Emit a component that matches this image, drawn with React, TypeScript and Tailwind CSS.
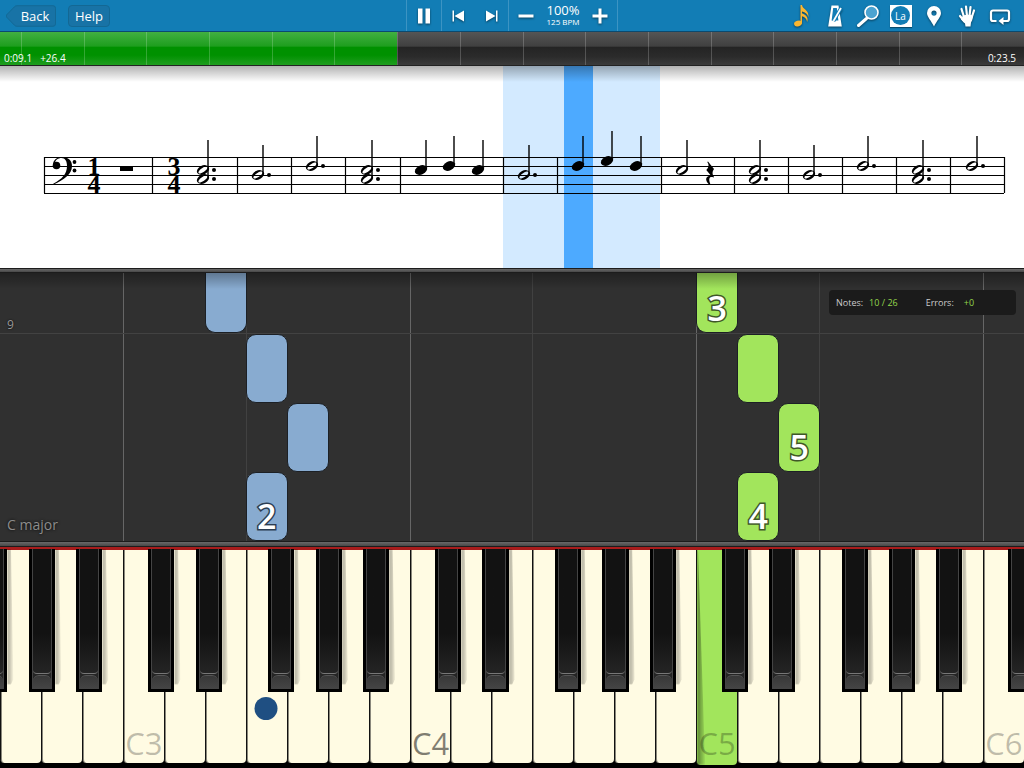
import { ReactNode } from "react";
import clsx from "clsx";

type Head = { x: number; y: number };
type ScoreNote = { x: number; ys: number[]; filled?: boolean; dotted?: boolean };

const STAFF_LINES = [91, 100, 109, 118, 127];
const BAR_LINES = [44, 152, 237, 291, 345, 400, 503, 557, 661, 734, 788, 842, 896, 950, 1004];

const SCORE: ScoreNote[] = [
    { x: 203, ys: [104, 113], dotted: true },
    { x: 258, ys: [109], dotted: true },
    { x: 312, ys: [100], dotted: true },
    { x: 367, ys: [104, 113], dotted: true },
    { x: 421, ys: [104], filled: true },
    { x: 449, ys: [100], filled: true },
    { x: 478, ys: [104], filled: true },
    { x: 524, ys: [109], dotted: true },
    { x: 578, ys: [100], filled: true },
    { x: 607, ys: [95], filled: true },
    { x: 636, ys: [100], filled: true },
    { x: 682, ys: [104] },
    { x: 755, ys: [104, 113], dotted: true },
    { x: 809, ys: [109], dotted: true },
    { x: 863, ys: [100], dotted: true },
    { x: 918, ys: [104, 113], dotted: true },
    { x: 972, ys: [100], dotted: true },
];

const FALLING_NOTES = [
    { place: "col-start-6 row-start-1", hand: "left", finger: "", cut: true },
    { place: "col-start-7 row-start-2", hand: "left", finger: "" },
    { place: "col-start-8 row-start-3", hand: "left", finger: "" },
    { place: "col-start-7 row-start-4", hand: "left", finger: "2" },
    { place: "col-start-18 row-start-1", hand: "right", finger: "3", cut: true },
    { place: "col-start-19 row-start-2", hand: "right", finger: "" },
    { place: "col-start-20 row-start-3", hand: "right", finger: "5" },
    { place: "col-start-19 row-start-4", hand: "right", finger: "4" },
];

const GRID_LINES = [
    { place: "col-start-4", strong: true },
    { place: "col-start-7", strong: false },
    { place: "col-start-11", strong: true },
    { place: "col-start-14", strong: false },
    { place: "col-start-18", strong: true },
    { place: "col-start-21", strong: false },
    { place: "col-start-25", strong: true },
];

// how far the sharp sits from the left edge of its white key
const SHARP_OFFSET: Record<string, string> = {
    C: "left-[62%]",
    D: "left-[78%]",
    F: "left-[55%]",
    G: "left-[71%]",
    A: "left-[86%]",
};

const WHITE_KEYS = Array.from({ length: 25 }, (_, i) => {
    const step = i + 4;
    return { name: "CDEFGAB"[step % 7], octave: 2 + Math.floor(step / 7) };
});

function ToolButton({ label, className, children }: { label: string; className?: string; children: ReactNode }) {
    return (
        <button type="button" aria-label={label} className={clsx("flex h-full items-center justify-center text-white", className ?? "w-[33px]")}>
            {children}
        </button>
    );
}

function Icon({ children }: { children: ReactNode }) {
    return (
        <svg viewBox="0 0 24 24" className="size-6 drop-shadow-[0_1px_1px_rgba(0,0,0,0.5)]" fill="currentColor" aria-hidden="true">
            {children}
        </svg>
    );
}

function TopBar() {
    return (
        <header className="grid h-8 shrink-0 grid-cols-[1fr_auto_1fr] border-b border-[#0b4a70] bg-[#127db5]">
            <div className="flex items-center gap-3 pl-1.5 text-[13px] leading-5 text-white">
                <button type="button" className="relative h-[22px] w-[50px] pl-2">
                    <svg viewBox="0 0 51 22" className="absolute inset-0 size-full" aria-hidden="true">
                        <path d="M11 .5H48a2.500 2.500 0 0 1 2.500 2.500V19a2.500 2.500 0 0 1-2.500 2.500H11q-1.500 0-2.500-1.200L.5 12q-.8-1 0-2L8.500 1.700Q9.500.5 11 .5Z" fill="#1873a6" stroke="#136894" />
                    </svg>
                    <span className="relative">Back</span>
                </button>
                <button type="button" className="h-[22px] w-[42px] rounded border border-[#136894] bg-[#1873a6]">Help</button>
            </div>

            <div className="flex w-[212px]">
                <ToolButton label="Pause" className="w-[35px] border-l border-[#3c94c3]">
                    <Icon><path d="M6 4.500h4.500v15H6zM13.500 4.500H18v15h-4.500z" /></Icon>
                </ToolButton>
                <div className="flex border-x border-[#3c94c3]">
                    <ToolButton label="Previous bar">
                        <Icon><path d="M5.500 6.500h1.500v11H5.500zM17 6.500v11L7.500 12z" /></Icon>
                    </ToolButton>
                    <ToolButton label="Next bar">
                        <Icon><path d="M16 6.500h1.500v11H16zM6 6.500v11L15.500 12z" /></Icon>
                    </ToolButton>
                </div>
                <div className="flex flex-1 items-center border-r border-[#3c94c3]">
                    <ToolButton label="Slower" className="w-[34px]">
                        <Icon><path d="M4.500 10.500h15v3h-15z" /></Icon>
                    </ToolButton>
                    <div className="flex flex-1 flex-col items-center whitespace-nowrap text-white">
                        <span className="text-[13px] leading-[13px]">100%</span>
                        <span className="text-[8px] leading-[10px] font-medium">125 BPM</span>
                    </div>
                    <ToolButton label="Faster" className="w-[34px]">
                        <Icon><path d="M4.500 10.500h6v-6h3v6h6v3h-6v6h-3v-6h-6z" /></Icon>
                    </ToolButton>
                </div>
            </div>

            <div className="flex justify-end pr-2">
                <ToolButton label="Notes">
                    <Icon>
                        <g fill="#fbb62f">
                            <ellipse cx="8" cy="19.500" rx="4" ry="2.800" transform="rotate(-18 8 19.500)" />
                            <path d="M10.500 1H12c.3 4 7.500 5 6.300 12-.5-3-3-4.900-6.300-5.600v1.800c3 1.300 7 3.500 5.100 8.800-.4-3.200-2.300-4.900-5.100-5.700V19.500h-1.500z" />
                        </g>
                    </Icon>
                </ToolButton>
                <ToolButton label="Metronome">
                    <Icon>
                        <path d="M8.500 1.500h7L18.800 22.500H5.200z" />
                        <path d="M10.200 4h3.600l1.600 12.500H8.600z" fill="#127db5" />
                        <path d="m10.500 17 7.500-13" stroke="#127db5" strokeWidth="3.600" />
                        <path d="m10.500 17 7.500-13" stroke="white" strokeWidth="1.700" />
                    </Icon>
                </ToolButton>
                <ToolButton label="Zoom">
                    <Icon>
                        <path d="m2.500 21.500 8-7" stroke="white" strokeWidth="3" strokeLinecap="round" />
                        <circle cx="15.500" cy="8.500" r="6.500" fill="#4ba3d1" stroke="white" strokeWidth="1.600" />
                    </Icon>
                </ToolButton>
                <ToolButton label="Note names">
                    <span className="flex size-[22px] items-center justify-center bg-white shadow-[0_1px_1px_rgba(0,0,0,0.4)]">
                        <span className="flex size-[19px] items-center justify-center rounded-full bg-[#127db5] text-[10px] leading-none">La</span>
                    </span>
                </ToolButton>
                <ToolButton label="Marker">
                    <Icon>
                        <path fillRule="evenodd" d="M12 2a7 7 0 0 1 7 7c0 4-4.500 8-7 13.500C9.500 17 5 13 5 9a7 7 0 0 1 7-7Zm0 4.500a2.600 2.600 0 1 0 0 5.200 2.600 2.600 0 0 0 0-5.200Z" />
                    </Icon>
                </ToolButton>
                <ToolButton label="Hands">
                    <Icon>
                        <g stroke="white" strokeWidth="2.200" strokeLinecap="round" fill="none">
                            <path d="m9 13-2.500-8M12 12l-1-9.500M14.500 12l1-9M16.500 14 19 6.500M9.500 17.500 5 12" />
                        </g>
                        <path d="M8 11.500q5-1.500 10 0-.3 4.500-2 7l-.5 4h-5l-.5-3-4-4z" />
                    </Icon>
                </ToolButton>
                <ToolButton label="Loop">
                    <Icon>
                        <path d="M8.500 17H5a2 2 0 0 1-2-2V8.500a2 2 0 0 1 2-2h14a2 2 0 0 1 2 2V15a2 2 0 0 1-2 2h-4" fill="none" stroke="white" strokeWidth="2.200" />
                        <path d="m10.500 17 5-4v8z" />
                    </Icon>
                </ToolButton>
            </div>
        </header>
    );
}

function ProgressBar() {
    return (
        <div className="relative h-[34px] shrink-0 border-b border-[#222] bg-[linear-gradient(#555,#404040_43%,#242424_46%,#2b2b2b_75%,#3b3b3b)] text-[10px] leading-3 text-white">
            <div className="absolute inset-y-0 left-0 w-[38.8%] bg-[linear-gradient(#42b042,#1e9e1e_43%,#009100_46%,#009100_70%,#1f9d1f)]" />
            <div className="absolute inset-0 flex">
                <div className="w-[21px]" />
                {Array.from({ length: 16 }, (_, i) => (
                    <div key={i} className="flex-1 border-l border-white/20" />
                ))}
            </div>
            <div className="relative flex h-full items-end gap-2 px-1 pb-px">
                <span>0:09.1</span>
                <span>+26.4</span>
                <span className="ml-auto pr-1">0:23.5</span>
            </div>
        </div>
    );
}

function HollowHead({ x, y }: Head) {
    return (
        <path
            fillRule="evenodd"
            d="M-6.500 0a6.500 4.500 0 1 0 13 0a6.500 4.500 0 1 0-13 0ZM-5.200.7a5.300 1.700-8 1 0 10.400-1.400a5.300 1.700-8 1 0-10.400 1.400Z"
            transform={`translate(${x} ${y}) rotate(-26)`}
        />
    );
}

function StemmedNote({ note }: { note: ScoreNote }) {
    const top = note.ys[0];
    const bottom = note.ys[note.ys.length - 1];
    return (
        <g>
            {note.ys.map((y) => (
                <g key={y}>
                    {note.filled ? (
                        <ellipse rx="6.500" ry="4.500" transform={`translate(${note.x} ${y}) rotate(-26)`} />
                    ) : (
                        <HollowHead x={note.x} y={y} />
                    )}
                    {note.dotted && <circle cx={note.x + 11} cy={y} r="2" />}
                </g>
            ))}
            <path d={`M${note.x + 5} ${bottom - 1}V${top - 30}`} stroke="black" strokeWidth="1.400" />
        </g>
    );
}

function SheetMusic() {
    return (
        <section aria-label="Sheet music" className="relative min-h-0 flex-[202] bg-white">
            <svg viewBox="0 0 1024 202" className="absolute inset-0 size-full">
                <rect x="503" y="0" width="157" height="202" fill="#d3eaff" />
                <rect x="564" y="0" width="29" height="202" fill="#4daaff" />

                <g stroke="black" strokeWidth="1.200">
                    {STAFF_LINES.map((y) => <path key={y} d={`M44 ${y + 0.5}H1004`} />)}
                    {BAR_LINES.map((x) => <path key={x} d={`M${x + 0.5} 91V127`} />)}
                </g>

                {/* bass clef */}
                <circle cx="56.500" cy="99.500" r="3.800" />
                <path d="M53.200 99.500C52.500 94 57 91 62 91c6.500 0 10 3.500 10 9 0 8-8 14-18.500 18.500l-.3-.7C62 113 67 108 67 100c0-5-1.800-8-5.500-8-3.500 0-6.500 2-6.800 6z" />
                <circle cx="74.500" cy="96" r="1.900" />
                <circle cx="74.500" cy="104.500" r="1.900" />

                <g fontFamily="Liberation Serif, serif" fontWeight="700" fontSize="26" textAnchor="middle">
                    <text x="94" y="109">1</text>
                    <text x="94" y="127">4</text>
                    <text x="174" y="109">3</text>
                    <text x="174" y="127">4</text>
                </g>
                <rect x="120" y="100" width="13" height="5" />

                {SCORE.map((note) => <StemmedNote key={note.x} note={note} />)}

                {/* quarter rest */}
                <path d="M708 95.500 714 103q-3 4 0 8l-.5.5c-4-1.500-5.500 1-3 7l-.7.5c-5-4-5-9 1-9.500l-4.500-5.500q4-4 1-8z" />
            </svg>
            <div className="absolute inset-x-0 top-0 h-4 bg-linear-to-b from-black/30 to-transparent" />
        </section>
    );
}

function Divider({ className }: { className: string }) {
    return <div className={clsx("shrink-0 border-y border-[#1c1c1c] bg-linear-to-b from-[#696969] to-[#484848]", className)} />;
}

function PianoRoll() {
    return (
        <section aria-label="Falling notes" className="relative min-h-0 flex-[268] overflow-hidden bg-[#303030]">
            <div className="grid h-full grid-cols-25 grid-rows-[61fr_69fr_69fr_69fr]">
                {GRID_LINES.map((line) => (
                    <div key={line.place} className={clsx("row-span-4 row-start-1 border-l", line.place, line.strong ? "border-[#666]" : "border-[#414141]")} />
                ))}
                <div className="col-span-25 col-start-1 row-start-1 border-b border-[#424242]" />
                {FALLING_NOTES.map((note) => (
                    <div
                        key={note.place}
                        className={clsx(
                            "relative -mr-px flex min-h-0 items-end justify-center border border-[#1c2025] pb-1 text-[34px] leading-10 font-semibold text-white [paint-order:stroke_fill]",
                            note.place,
                            note.cut ? "mb-px rounded-b-[10px] border-t-0" : "rounded-[10px]",
                            note.hand === "left" ? "bg-[#88abd0] [-webkit-text-stroke:3px_#2c3d52]" : "bg-[#a2e55c] [-webkit-text-stroke:3px_#3f5728]"
                        )}
                    >
                        {note.finger}
                    </div>
                ))}
            </div>
            <div className="absolute inset-x-0 top-0 h-4 bg-linear-to-b from-black/30 to-transparent" />
            <div className="absolute inset-x-0 top-0 h-[61px] pl-[7px] text-xs font-medium text-[#999] text-shadow-[0_0_2px_black]">
                <span className="flex h-full items-end pb-px">9</span>
            </div>
            <span className="absolute bottom-1.5 left-[7px] text-sm font-medium text-[#8c8c8c] text-shadow-[0_0_3px_black]">C major</span>

            <div className="absolute top-[17px] right-2 flex h-[25px] w-[187px] items-center rounded bg-[#1b1b1b] px-[7px] text-[9px] text-[#ccc]">
                <span>Notes:</span>
                <span className="ml-1.5 text-[#93d64b]">10 / 26</span>
                <span className="ml-7">Errors:</span>
                <span className="ml-2.5 text-[#93d64b]">+0</span>
            </div>
        </section>
    );
}

function BlackKey({ label, offset }: { label: string; offset: string }) {
    return (
        <button type="button" aria-label={label} className={clsx("absolute -top-px z-10 h-[67%] w-[64%] bg-black px-[3px] pb-[3px]", offset)}>
            <span className="absolute top-0 left-full h-[95%] w-[6px] bg-linear-to-r from-black/35 via-black/20 to-black/5 blur-[1px] [clip-path:polygon(0_0,60%_0,100%_96%,60%_100%,0_100%)]" />
            <span className="flex h-full flex-col border-x border-[#444] bg-linear-to-b from-[#121212] from-60% to-[#2c2c2c]">
                <span className="flex-1 rounded-b border-b border-[#777]" />
                <span className="mt-px h-[14px] rounded-t-md border-t border-[#555] bg-linear-to-b from-[#383838] to-[#454545]" />
            </span>
        </button>
    );
}

function Keyboard() {
    return (
        <section aria-label="Keyboard" className="min-h-0 flex-[221] bg-black">
            <div className="flex h-full overflow-x-clip border-t-[3px] border-[#a81c1c] pb-[5px]">
                {WHITE_KEYS.map(({ name, octave }, i) => {
                    const pressed = name === "C" && octave === 5;
                    return (
                        <div key={i} className="relative flex-1">
                            <button
                                type="button"
                                aria-label={`${name}${octave}`}
                                className={clsx(
                                    "relative flex w-full items-end justify-center rounded-b border-l border-[#111] text-[31px] leading-10",
                                    pressed ? "h-[calc(100%+2px)] bg-[#a2e55c] pb-0.5" : "h-full bg-[#fffbe3] shadow-[inset_1px_0_#8a887c]",
                                    octave === 4 ? "text-black/50" : "text-black/25"
                                )}
                            >
                                {pressed && <span className="absolute inset-y-0 left-0 w-2 bg-linear-to-r from-black/45 to-black/5 blur-[1px] [clip-path:polygon(0_0,10%_0,100%_100%,0_100%)]" />}
                                {name === "C" && `C${octave}`}
                            </button>
                            {i === 0 && <BlackKey label="F#2" offset="left-[-46%]" />}
                            {SHARP_OFFSET[name] && <BlackKey label={`${name}#${octave}`} offset={SHARP_OFFSET[name]} />}
                            {name === "F" && octave === 3 && <span className="absolute top-[69%] left-1/2 size-[23px] -translate-x-1/2 rounded-full bg-[#1f4f82]" />}
                        </div>
                    );
                })}
            </div>
        </section>
    );
}

export default function App() {
    return (
        <main className="flex h-screen min-h-[480px] flex-col overflow-hidden bg-black font-['Open_Sans','Noto_Sans',sans-serif]">
            <TopBar />
            <ProgressBar />
            <SheetMusic />
            <Divider className="h-[5px]" />
            <PianoRoll />
            <Divider className="h-1.5" />
            <Keyboard />
        </main>
    );
}
